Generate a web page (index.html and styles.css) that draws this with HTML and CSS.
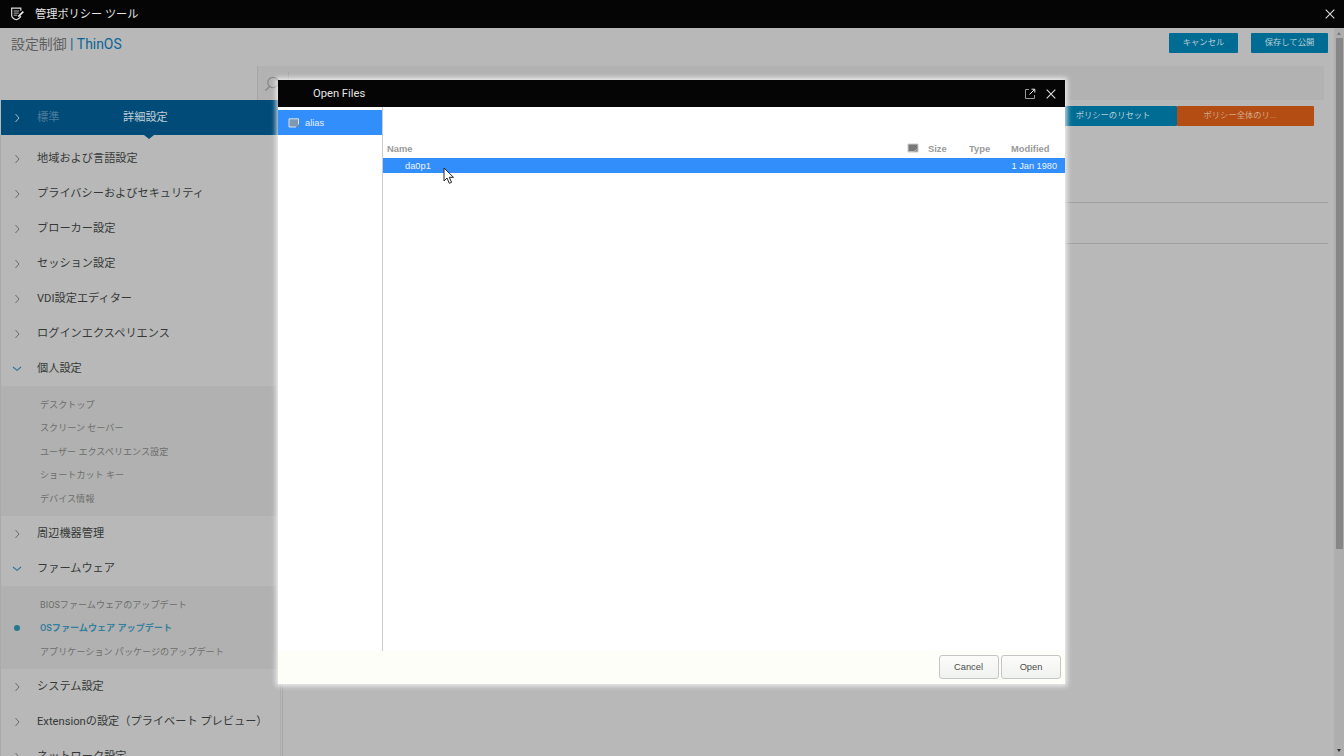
FILE: index.html
```html
<!DOCTYPE html>
<html lang="ja">
<head>
<meta charset="utf-8">
<title>管理ポリシー ツール</title>
<link rel="stylesheet" href="styles.css">
</head>
<body>
<svg class="defs" width="0" height="0">
  <symbol id="right" viewBox="0 0 10 10"><path d="M3.500 1 L7 5 L3.500 9" fill="none" stroke="currentColor" stroke-width="1"/></symbol>
  <symbol id="down" viewBox="0 0 10 10"><path d="M1 3 L5 6.300 L9 3" fill="none" stroke="currentColor" stroke-width="1.1"/></symbol>
  <symbol id="close" viewBox="0 0 10 10"><path d="M.7 .7 L9.3 9.3 M9.3 .7 L.7 9.3" fill="none" stroke="currentColor" stroke-width="1.1"/></symbol>
</svg>
<div class="app">
  <header class="topbar">
    <svg class="logo" viewBox="0 0 14 14"><path d="M10.300 3.800V1.200H1.200v7.200c0 2 2 3.400 4.600 4.400 2.400-.8 4-1.900 4.500-3.600" fill="none" stroke="#ddd" stroke-width="1.200"/><path d="M3.200 4h5.500M3.200 6.100h5M3.200 8.200h3.500" stroke="#bbb" stroke-width="1"/><path d="M7.800 9.700l5-5" stroke="#eee" stroke-width="1.700"/></svg>
    <span class="apptitle">管理ポリシー ツール</span>
    <svg class="x"><use href="#close"/></svg>
  </header>
  <div class="page">
    <div class="content">
      <div class="heading">
        <h1>設定制御 <span>| ThinOS</span></h1>
        <button class="btn cancel">キャンセル</button>
        <button class="btn save">保存して公開</button>
      </div>
      <div class="search">
        <svg viewBox="0 0 16 16"><circle cx="9" cy="6.500" r="5.200" fill="none" stroke="#868686" stroke-width="1.200"/><path d="M5.500 10.500L1.500 14.500" stroke="#868686" stroke-width="1.500"/></svg>
        <i></i>
      </div>
      <div class="columns">
        <nav class="side">
          <div class="tabs"><svg class="ic"><use href="#right"/></svg><span class="tab off">標準</span><span class="tab on">詳細設定</span></div>
          <div class="menu">
            <div class="item"><svg class="ic"><use href="#right"/></svg>地域および言語設定</div>
            <div class="item"><svg class="ic"><use href="#right"/></svg>プライバシーおよびセキュリティ</div>
            <div class="item"><svg class="ic"><use href="#right"/></svg>ブローカー設定</div>
            <div class="item"><svg class="ic"><use href="#right"/></svg>セッション設定</div>
            <div class="item"><svg class="ic"><use href="#right"/></svg>VDI設定エディター</div>
            <div class="item"><svg class="ic"><use href="#right"/></svg>ログインエクスペリエンス</div>
            <div class="item"><svg class="ic open"><use href="#down"/></svg>個人設定</div>
            <div class="group">
              <div class="sub">デスクトップ</div>
              <div class="sub">スクリーン セーバー</div>
              <div class="sub">ユーザー エクスペリエンス設定</div>
              <div class="sub">ショートカット キー</div>
              <div class="sub">デバイス情報</div>
            </div>
            <div class="item"><svg class="ic"><use href="#right"/></svg>周辺機器管理</div>
            <div class="item"><svg class="ic open"><use href="#down"/></svg>ファームウェア</div>
            <div class="group">
              <div class="sub">BIOSファームウェアのアップデート</div>
              <div class="sub current">OSファームウェア アップデート</div>
              <div class="sub">アプリケーション パッケージのアップデート</div>
            </div>
            <div class="item"><svg class="ic"><use href="#right"/></svg>システム設定</div>
            <div class="item"><svg class="ic"><use href="#right"/></svg>Extensionの設定（プライベート プレビュー）</div>
            <div class="item"><svg class="ic"><use href="#right"/></svg>ネットワーク設定</div>
          </div>
        </nav>
        <main class="main">
          <div class="actions"><button class="btn reset">ポリシーのリセット</button><button class="btn resetall">ポリシー全体のリ...</button></div>
          <div class="panel"></div>
        </main>
      </div>
    </div>
    <div class="scroll"><i class="up"></i><div class="thumb"></div><i class="dn"></i></div>
  </div>
</div>
<section class="dialog">
  <header class="dtitle">
    <span>Open Files</span>
    <svg class="pop" viewBox="0 0 12 12"><path d="M5 1.500H1.500v9h9V7" fill="none" stroke="#999"/><path d="M5.500 6.500L10.500 1.500M7.500 1.200h3.300v3.300" fill="none" stroke="#eee"/></svg>
    <svg class="dx"><use href="#close"/></svg>
  </header>
  <div class="dbody">
    <aside class="places"><div class="place"><svg viewBox="0 0 12 10"><path d="M1 .8h9.500v5.500L8 9H1z" fill="#8098b4" stroke="#d4e3f3"/><path d="M7.500 9l3-3v3z" fill="#7c8795"/></svg>alias</div></aside>
    <div class="files">
      <div class="cols"><span class="name">Name</span><svg viewBox="0 0 12 10"><path d="M1 1h10v8H1z" fill="#777" stroke="#ccc"/><path d="M1 8.500h6l3-2" stroke="#bbb" fill="none"/></svg><span class="size">Size</span><span class="type">Type</span><span class="mod">Modified</span></div>
      <div class="file"><span>da0p1</span><span class="date">1 Jan 1980</span></div>
    </div>
  </div>
  <footer class="dfoot"><button>Cancel</button><button>Open</button></footer>
</section>
<svg class="cursor" viewBox="0 0 12 18"><path d="M1 1v13l3-3 2.300 5.300 2.300-1-2.300-5H10.500z" fill="#fff" stroke="#222" stroke-width="1"/></svg>
</body>
</html>
```
FILE: styles.css
```css
* { box-sizing: border-box; }
body { margin: 0; width: 1344px; height: 756px; overflow: hidden; font-family: Roboto, "Noto Sans CJK JP", sans-serif; background: #b8b8b8; }
button { font-family: inherit; border: 0; padding: 0; }
.defs { position: absolute; }
.app { height: 756px; display: flex; flex-direction: column; }
.topbar { height: 28px; flex: none; background: #050505; color: #e6e6e6; display: flex; align-items: center; padding: 0 9px 0 10px; }
.logo { width: 15px; height: 14px; margin-right: 10px; }
.apptitle { font-size: 11.2px; flex: 1; line-height: 28px; padding-top: 2px; }
.x { width: 10px; height: 10px; color: #ddd; }
.page { flex: 1; display: flex; min-height: 0; }
.content { flex: 1; min-width: 0; display: flex; flex-direction: column; }
.heading { height: 38px; flex: none; display: flex; align-items: flex-start; padding: 5px 6px 0 11px; }
h1 { margin: 0; flex: 1; font-size: 13.9px; font-weight: 400; line-height: 22px; color: #5e5e5e; }
h1 span { color: #086697; }
.btn { height: 20px; font-size: 8.3px; line-height: 19px; padding-bottom: 1px; color: #b9cfd6; background: #006c93; border-radius: 1px; }
.cancel { width: 69px; margin-right: 13px; }
.save { width: 77px; }
.search { height: 34px; flex: none; margin: 0 10px 0 257px; background: #b2b2b2; border-left: 1px solid #a6a6a6; display: flex; padding: 10px 0 0 6px; }
.search svg { width: 16px; height: 16px; }
.search i { width: 1px; height: 20px; background: #a5a5a5; margin: -4px 0 0 8px; }
.columns { flex: 1; display: flex; min-height: 0; }
.side { width: 283px; flex: none; border-right: 1px solid #a8a8a8; overflow: hidden; }
.tabs { height: 35px; margin-left: 1px; background: #004b78; display: flex; align-items: center; padding-left: 11px; font-size: 11.2px; position: relative; }
.tabs::after { content: ""; position: absolute; left: 143px; top: 35px; border: 5px solid transparent; border-top: 4.5px solid #004b78; border-bottom: 0; }
.tab { line-height: 35px; }
.tabs .ic { color: #a9bcc8; }
.off { width: 86px; color: #4d7c98; }
.on { color: #c3ced5; }
.ic { width: 10px; height: 10px; flex: none; margin-right: 15px; color: #686868; }
.ic.open { color: #2d7196; }
.menu { height: 621px; width: 281px; padding-top: 6px; border-left: 1px solid #aaa; border-right: 1px solid #acacac; }
.item { height: 35px; display: flex; align-items: center; padding-left: 11px; font-size: 11.2px; line-height: 36px; color: #353837; white-space: nowrap; }
.group { background: #b1b1b1; padding: 6.6px 0 5.7px; }
.sub { height: 23.6px; line-height: 25px; font-size: 9.1px; color: #6c6e6c; padding-left: 39px; white-space: nowrap; }
.current { color: #347e9f; font-weight: 600; position: relative; }
.current::before { content: ""; position: absolute; left: 13px; top: 9px; width: 6px; height: 6px; border-radius: 50%; background: #26788f; }
.main { flex: 1; padding: 6px 6px 0 0; }
.actions { display: flex; justify-content: flex-end; padding-right: 14px; }
.reset { width: 128px; }
.resetall { width: 137px; padding-right: 11px; background: #b34d14; color: #d3a88c; }
.panel { margin-top: 76px; height: 42px; border-top: 1px solid #a0a0a0; border-bottom: 1px solid #a0a0a0; }
.scroll { width: 10px; background: #aeaeae; display: flex; flex-direction: column; align-items: center; }
.up { margin: 4px 0 3px; border: 2.5px solid transparent; border-bottom: 3px solid #777; border-top: 0; }
.thumb { width: 7px; height: 511px; background: #868686; }
.dn { margin-top: auto; margin-bottom: 4px; border: 2.5px solid transparent; border-top: 3px solid #303030; border-bottom: 0; }
.dialog { position: absolute; left: 278px; top: 80px; width: 787px; height: 604px; background: #fff; box-shadow: 0 0 5px 2px rgba(255,255,255,.8); display: flex; flex-direction: column; font-family: "Liberation Sans", sans-serif; }
.dtitle { height: 27px; background: #050505; color: #e4e4e4; font: 11.2px Roboto, sans-serif; display: flex; align-items: center; padding: 0 9px 0 35px; }
.dtitle span { flex: 1; }
.pop { width: 12px; height: 12px; margin-right: 10px; }
.dx { width: 10px; height: 10px; color: #ddd; }
.dbody { flex: 1; display: flex; }
.places { width: 105px; border-right: 1px solid #ccc; padding-top: 3px; }
.place { height: 25px; background: #328efb; color: #e8f2ff; display: flex; align-items: center; padding-left: 10px; font-size: 9.3px; }
.place svg { width: 12px; height: 10px; margin-right: 5px; }
.files { flex: 1; padding-top: 33px; }
.cols { height: 18px; padding-bottom: 2px; display: flex; align-items: center; font-size: 9.4px; font-weight: 700; color: #9a9a9a; padding-left: 4px; }
.cols svg { width: 12px; height: 10px; margin-right: 9px; }
.name { width: 520px; }
.size { width: 41px; }
.type { width: 42px; }
.file { height: 15px; background: #328efb; color: #edf5ff; display: flex; justify-content: space-between; align-items: center; font-size: 9.3px; padding: 0 8px 0 22px; }
.date { font-size: 9.2px; }
.dfoot { height: 33px; background: #fdfef8; display: flex; justify-content: flex-end; gap: 2.5px; padding: 4px 4px 0 0; }
.dfoot button { width: 60px; height: 24px; border: 1px solid #c4c6c4; border-radius: 3px; background: linear-gradient(#fcfdfb, #f0f2f0); color: #4b4d4b; font-size: 9.3px; }
.cursor { position: absolute; left: 443px; top: 167px; width: 12px; height: 18px; }
```
